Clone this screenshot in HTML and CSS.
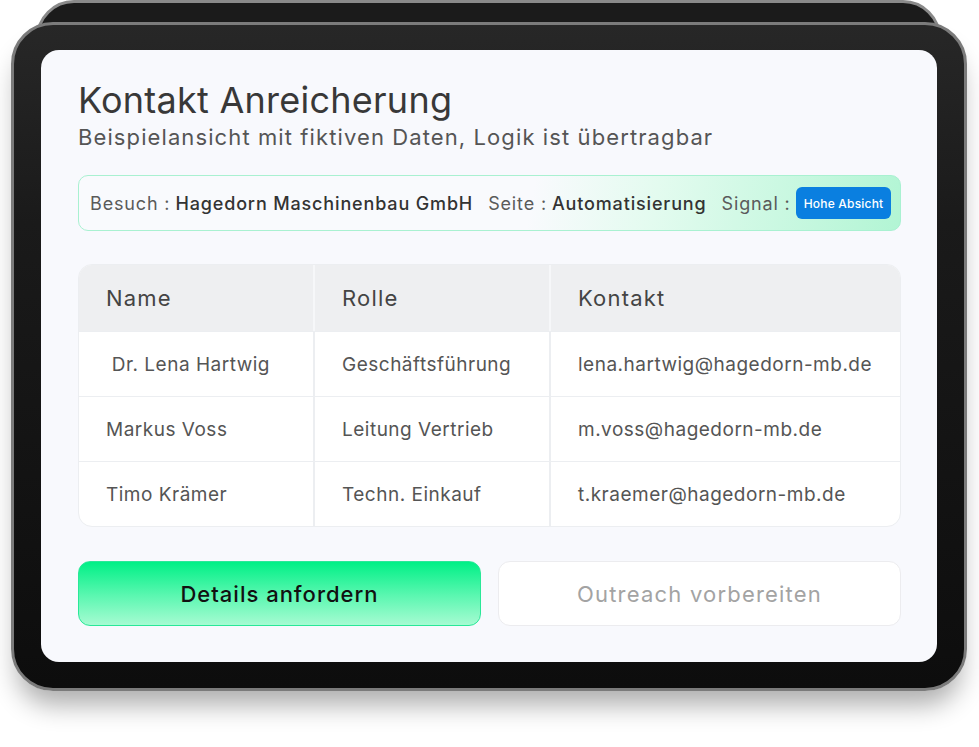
FILE: index.html
```html
<!DOCTYPE html>
<html lang="de">
<head>
<meta charset="utf-8">
<title>Kontakt Anreicherung</title>
<link rel="stylesheet" href="styles.css">
</head>
<body>
<div class="stage">
  <div class="device">
    <div class="screen">
      <header class="head">
        <h1 class="title">Kontakt Anreicherung</h1>
        <p class="subtitle">Beispielansicht mit fiktiven Daten, Logik ist übertragbar</p>
      </header>
      <div class="infobar">
        <span class="seg"><span class="lbl">Besuch :</span> <span class="val">Hagedorn Maschinenbau GmbH</span></span>
        <span class="seg"><span class="lbl">Seite :</span> <span class="val">Automatisierung</span></span>
        <span class="seg"><span class="lbl">Signal :</span> <span class="badge">Hohe Absicht</span></span>
      </div>
      <div class="table">
        <div class="row hrow">
          <div class="cell">Name</div>
          <div class="cell">Rolle</div>
          <div class="cell">Kontakt</div>
        </div>
        <div class="row">
          <div class="cell">&nbsp;Dr. Lena Hartwig</div>
          <div class="cell">Geschäftsführung</div>
          <div class="cell">lena.hartwig@hagedorn-mb.de</div>
        </div>
        <div class="row">
          <div class="cell">Markus Voss</div>
          <div class="cell">Leitung Vertrieb</div>
          <div class="cell">m.voss@hagedorn-mb.de</div>
        </div>
        <div class="row">
          <div class="cell">Timo Krämer</div>
          <div class="cell">Techn. Einkauf</div>
          <div class="cell">t.kraemer@hagedorn-mb.de</div>
        </div>
      </div>
      <div class="actions">
        <button class="btn primary">Details anfordern</button>
        <button class="btn secondary">Outreach vorbereiten</button>
      </div>
    </div>
  </div>
</div>
</body>
</html>
```

FILE: styles.css
```css
html, body {
  margin: 0;
  padding: 0;
  background: #ffffff;
}
body {
  width: 979px;
  height: 747px;
  overflow: hidden;
  font-family: Inter, "Noto Sans", "Liberation Sans", sans-serif;
}
.stage {
  position: relative;
  z-index: 0;
  padding: 22px 0 0 11px;
}
.device {
  position: relative;
  box-sizing: border-box;
  width: 956px;
  height: 669px;
  border: 3px solid #7b7b7b;
  border-radius: 42px;
  background: linear-gradient(180deg, #272727 0%, #1a1a1a 30%, #0d0d0d 100%);
  padding: 25px 27px 26px 27px;
  box-shadow: 0 20px 26px -6px rgba(0, 0, 0, 0.32);
}
.device::before {
  content: "";
  position: absolute;
  z-index: -1;
  left: 22px;
  top: -25px;
  width: 905px;
  height: 120px;
  box-sizing: border-box;
  border: 3px solid #8a8a8a;
  border-radius: 38px;
  background: #1b1b1b;
}
.screen {
  box-sizing: border-box;
  width: 896px;
  height: 612px;
  border-radius: 18px;
  background: #f8f9fd;
  padding: 30px 36px 0 37px;
  display: flex;
  flex-direction: column;
}
.head {
  display: flex;
  flex-direction: column;
}
.title {
  margin: 0;
  font-size: 36px;
  line-height: 40px;
  font-weight: 400;
  color: #383838;
  letter-spacing: 0.25px;
}
.subtitle {
  margin: 2px 0 0 0;
  font-size: 22px;
  line-height: 30px;
  color: #555555;
  letter-spacing: 1.1px;
}
.infobar {
  margin-top: 23px;
  box-sizing: border-box;
  height: 56px;
  border: 1px solid #a9f1d1;
  border-radius: 10px;
  background: linear-gradient(100deg, #f9fafd 0%, #f9fafd 55%, #e3fbef 70%, #b2f5d4 100%);
  display: flex;
  align-items: center;
  gap: 15px;
  padding: 0 11px;
  font-size: 18px;
  letter-spacing: 0.85px;
}
.seg {
  display: flex;
  align-items: center;
  gap: 5px;
  white-space: nowrap;
}
.lbl {
  color: #5a5a5a;
}
.val {
  color: #333333;
  font-weight: 500;
}
.badge {
  background: #0a7fe0;
  color: #ffffff;
  font-size: 12px;
  font-weight: 500;
  letter-spacing: 0.2px;
  height: 32px;
  padding: 0 8px;
  border-radius: 6px;
  display: inline-flex;
  align-items: center;
}
.table {
  margin-top: 33px;
  border: 1px solid #eceef1;
  border-radius: 14px;
  overflow: hidden;
  background: #ffffff;
}
.row {
  display: grid;
  grid-template-columns: 234px 236px 1fr;
  height: 65px;
  border-top: 1px solid #eceef1;
  box-sizing: border-box;
}
.row:first-child {
  border-top: none;
}
.hrow {
  background: #eeeff1;
  height: 66px;
}
.cell {
  display: flex;
  align-items: center;
  padding-left: 27px;
  font-size: 19px;
  letter-spacing: 0.5px;
  color: #555555;
  border-left: 2px solid #eceef1;
  white-space: nowrap;
}
.hrow .cell {
  border-left-color: #f6f7f9;
  font-size: 22px;
  letter-spacing: 1.2px;
  color: #444444;
}
.cell:first-child {
  border-left: none;
}
.actions {
  margin-top: 34px;
  display: grid;
  grid-template-columns: 1fr 1fr;
  gap: 17px;
}
.btn {
  height: 65px;
  border-radius: 12px;
  font-family: Inter, "Noto Sans", "Liberation Sans", sans-serif;
  font-size: 22px;
  cursor: pointer;
}
.primary {
  border: 1px solid #2ae898;
  background: linear-gradient(180deg, #00f086 0%, #5ef7b2 55%, #a6fbd2 100%);
  color: #111111;
  font-weight: 500;
  letter-spacing: 1px;
}
.secondary {
  border: 1px solid #ececef;
  background: #ffffff;
  color: #a3a3a3;
  font-weight: 400;
  letter-spacing: 1.2px;
}
```
